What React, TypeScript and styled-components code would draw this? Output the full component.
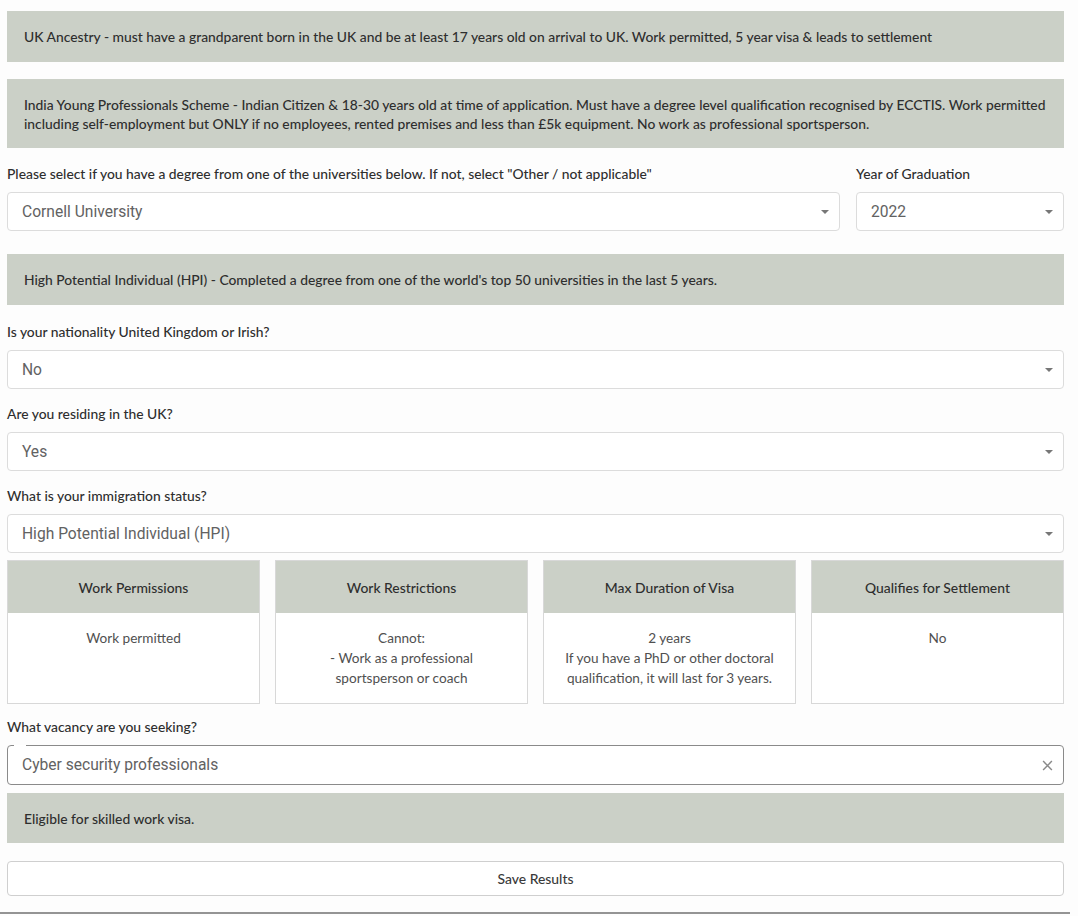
import React from "react"
import styled, { createGlobalStyle } from "styled-components"

const GlobalStyle = createGlobalStyle`
  body {
    margin: 0;
    background: #fdfdfd;
    font-family: Lato, "Liberation Sans", sans-serif;
    color: #333;
  }
`

const Page = styled.div`
  width: 1070px;
  padding: 11px 0 0 0;
  border-bottom: 2px solid #949494;
  box-sizing: border-box;
  height: 914px;
`

const Column = styled.div`
  width: 1057px;
  margin-left: 7px;
  display: flex;
  flex-direction: column;
`

const Banner = styled.div<{ $h: number; $mt?: number }>`
  background: #cbd0c7;
  min-height: ${(p) => p.$h}px;
  margin-top: ${(p) => p.$mt ?? 0}px;
  padding: 0 17px;
  display: flex;
  align-items: center;
  box-sizing: border-box;
  font-size: 13.85px;
  line-height: 19px;
  color: #2e2e2e;
  font-weight: 500;
`

const Label = styled.div<{ $mt: number }>`
  margin-top: ${(p) => p.$mt}px;
  margin-bottom: 9px;
  font-size: 13.85px;
  line-height: 18px;
  color: #2e2e2e;
  font-weight: 500;
`

const Row = styled.div`
  display: flex;
  gap: 16px;
  align-items: flex-end;
`

const Field = styled.div<{ $w?: number }>`
  display: flex;
  flex-direction: column;
  flex: ${(p) => (p.$w ? `0 0 ${p.$w}px` : "1 1 auto")};
`

const SelectBox = styled.div<{ $focus?: boolean }>`
  position: relative;
  height: ${(p) => (p.$focus ? 40 : 39)}px;
  border: 1px solid ${(p) => (p.$focus ? "#8a8a8a" : "#dcdcdc")};
  border-radius: 4px;
  background: #fff;
  display: flex;
  align-items: center;
  padding: 0 10px 0 14px;
  box-sizing: border-box;
  font-family: Roboto, "Liberation Sans", sans-serif;
  font-size: 15.6px;
  color: #626262;
`

const Value = styled.span`
  flex: 1;
`

const Arrow = styled.span`
  width: 0;
  height: 0;
  border-left: 4px solid transparent;
  border-right: 4px solid transparent;
  border-top: 4px solid #777;
`

const Notch = styled.span`
  position: absolute;
  top: -1px;
  left: 6px;
  width: 12px;
  height: 2px;
  background: #fff;
`

const Cards = styled.div`
  margin-top: 7px;
  display: grid;
  grid-template-columns: repeat(4, 1fr);
  gap: 15px;
`

const Card = styled.div`
  border: 1px solid #d8d8d8;
  height: 144px;
  display: flex;
  flex-direction: column;
  background: #fff;
  box-sizing: border-box;
`

const CardHead = styled.div`
  background: #cbd0c7;
  height: 52px;
  display: flex;
  align-items: center;
  justify-content: center;
  font-size: 13.9px;
  font-weight: 500;
  color: #2e2e2e;
`

const CardBody = styled.div`
  padding: 15px 8px 0;
  text-align: center;
  font-size: 13.6px;
  line-height: 20px;
  color: #505050;
  white-space: pre-line;
`

const SaveButton = styled.button`
  margin-top: 18px;
  height: 35px;
  border: 1px solid #cfcfcf;
  border-radius: 4px;
  background: #fff;
  font-family: Lato, "Liberation Sans", sans-serif;
  font-size: 13.9px;
  font-weight: 500;
  color: #3a3a3a;
`

const Select = ({ value }: { value: string }) => (
  <SelectBox>
    <Value>{value}</Value>
    <Arrow />
  </SelectBox>
)

const ClearIcon = () => (
  <svg width="11" height="11" viewBox="0 0 10 10">
    <path d="M1 1L9 9M9 1L1 9" stroke="#8a8a8a" strokeWidth="1.3" />
  </svg>
)

const cards = [
  { title: "Work Permissions", body: "Work permitted" },
  {
    title: "Work Restrictions",
    body: "Cannot:\n- Work as a professional\nsportsperson or coach",
  },
  {
    title: "Max Duration of Visa",
    body: "2 years\nIf you have a PhD or other doctoral\nqualification, it will last for 3 years.",
  },
  { title: "Qualifies for Settlement", body: "No" },
]

export default function App() {
  return (
    <>
      <GlobalStyle />
      <Page>
        <Column>
          <Banner $h={51}>
            UK Ancestry - must have a grandparent born in the UK and be at least 17 years old on
            arrival to UK. Work permitted, 5 year visa &amp; leads to settlement
          </Banner>
          <Banner $h={69} $mt={17}>
            India Young Professionals Scheme - Indian Citizen &amp; 18-30 years old at time of
            application. Must have a degree level qualification recognised by ECCTIS. Work permitted
            including self-employment but ONLY if no employees, rented premises and less than £5k
            equipment. No work as professional sportsperson.
          </Banner>
          <Row>
            <Field>
              <Label $mt={17}>
                Please select if you have a degree from one of the universities below. If not,
                select "Other / not applicable"
              </Label>
              <Select value="Cornell University" />
            </Field>
            <Field $w={208}>
              <Label $mt={17}>Year of Graduation</Label>
              <Select value="2022" />
            </Field>
          </Row>
          <Banner $h={51} $mt={23}>
            High Potential Individual (HPI) - Completed a degree from one of the world's top 50
            universities in the last 5 years.
          </Banner>
          <Label $mt={18}>Is your nationality United Kingdom or Irish?</Label>
          <Select value="No" />
          <Label $mt={16}>Are you residing in the UK?</Label>
          <Select value="Yes" />
          <Label $mt={16}>What is your immigration status?</Label>
          <Select value="High Potential Individual (HPI)" />
          <Cards>
            {cards.map((c) => (
              <Card key={c.title}>
                <CardHead>{c.title}</CardHead>
                <CardBody>{c.body}</CardBody>
              </Card>
            ))}
          </Cards>
          <Label $mt={14}>What vacancy are you seeking?</Label>
          <SelectBox $focus>
            <Notch />
            <Value>Cyber security professionals</Value>
            <ClearIcon />
          </SelectBox>
          <Banner $h={50} $mt={8}>
            Eligible for skilled work visa.
          </Banner>
          <SaveButton>Save Results</SaveButton>
        </Column>
      </Page>
    </>
  )
}
